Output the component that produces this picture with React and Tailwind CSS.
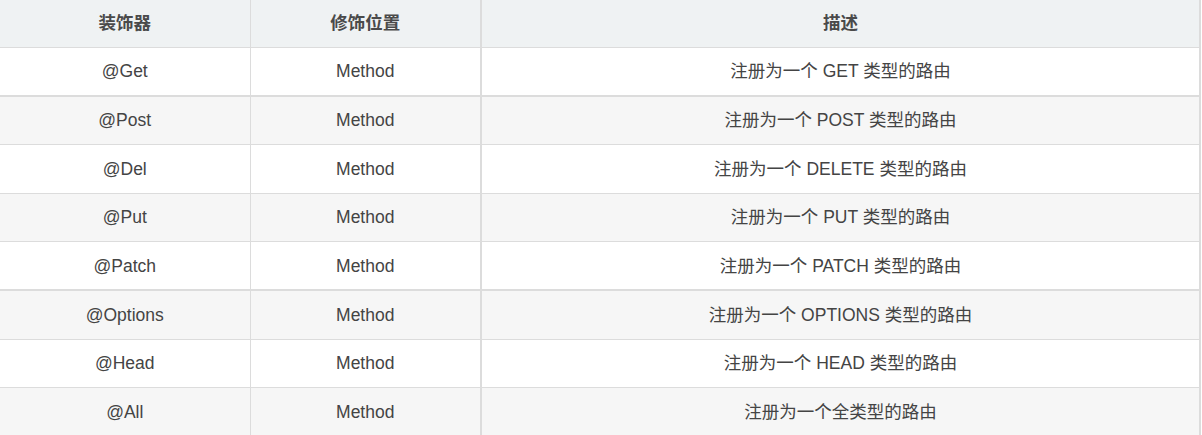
const rows = [
  ["@Get", "Method", "注册为一个 GET 类型的路由"],
  ["@Post", "Method", "注册为一个 POST 类型的路由"],
  ["@Del", "Method", "注册为一个 DELETE 类型的路由"],
  ["@Put", "Method", "注册为一个 PUT 类型的路由"],
  ["@Patch", "Method", "注册为一个 PATCH 类型的路由"],
  ["@Options", "Method", "注册为一个 OPTIONS 类型的路由"],
  ["@Head", "Method", "注册为一个 HEAD 类型的路由"],
  ["@All", "Method", "注册为一个全类型的路由"],
];

export default function App() {
  return (
    <div className="w-[1202px] h-[435px] overflow-hidden bg-white">
      <table
        className="w-[1201px] border-collapse table-fixed text-[17.5px] text-[#444]"
        style={{ fontFamily: '"Liberation Sans", Arial, "Noto Sans CJK SC", sans-serif' }}
      >
        <colgroup>
          <col className="w-[250px]" />
          <col className="w-[231px]" />
          <col />
        </colgroup>
        <thead>
          <tr className="bg-[#eff2f3] h-[47px]">
            <th className="border-r border-r-[#dcdcdc] border-b border-b-[#dcdcdc] font-bold text-[#4a4a4a] text-center">装饰器</th>
            <th className="border-r-2 border-r-[#dcdcdc] border-b border-b-[#dcdcdc] font-bold text-[#4a4a4a] text-center">修饰位置</th>
            <th className="border-r-2 border-r-[#dcdcdc] border-b border-b-[#dcdcdc] font-bold text-[#4a4a4a] text-center">描述</th>
          </tr>
        </thead>
        <tbody>
          {rows.map((r, i) => (
            <tr
              key={i}
              className={`${i % 2 === 0 ? "bg-white" : "bg-[#f6f6f6]"} h-[48.7px]`}
            >
              <td className={`border-r border-r-[#dcdcdc] ${i === 0 || i === 4 ? "border-b-2" : "border-b"} border-b-[#dcdcdc] text-center`}>{r[0]}</td>
              <td className={`border-r-2 border-r-[#dcdcdc] ${i === 0 || i === 4 ? "border-b-2" : "border-b"} border-b-[#dcdcdc] text-center`}>{r[1]}</td>
              <td className={`border-r-2 border-r-[#dcdcdc] ${i === 0 || i === 4 ? "border-b-2" : "border-b"} border-b-[#dcdcdc] text-center`}>{r[2]}</td>
            </tr>
          ))}
        </tbody>
      </table>
    </div>
  );
}
